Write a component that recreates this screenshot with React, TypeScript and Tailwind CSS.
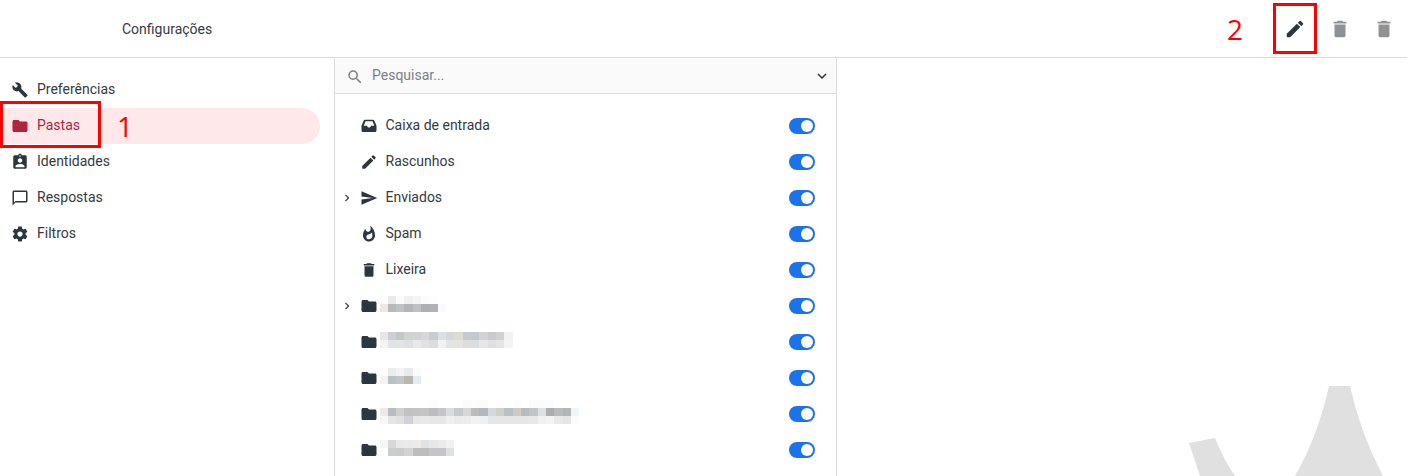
import React from 'react';
import {
  MdFolder,
  MdAssignmentInd,
  MdChatBubbleOutline,
  MdEdit,
  MdSend,
  MdWhatshot,
  MdDelete,
  MdExpandMore,
  MdChevronRight,
} from 'react-icons/md';

type IconProps = { size?: number; className?: string };

// inbox with a rounded tray, not in the icon set
const InboxIcon = ({ size = 18, className }: IconProps) => (
  <svg width={size} height={size} viewBox="0 0 24 24" fill="currentColor" className={className}>
    <path fillRule="evenodd" d="M7 3.500h10c1 0 1.800.5 2.200 1.400L22 11.500V18c0 1.100-.9 2-2 2H4c-1.100 0-2-.9-2-2v-6.500l2.800-6.600C5.200 4 6 3.500 7 3.500zm.3 2.300L5 11.500h4.500c0 1.400 1.100 2.500 2.500 2.500s2.500-1.100 2.500-2.500H19l-2.300-5.700H7.300z" />
  </svg>
);

const WrenchIcon = ({ size = 18, className }: IconProps) => (
  <svg width={size} height={size} viewBox="-1 -1 26 26" fill="currentColor" className={className}>
    <path d="M22.700 19l-9.100-9.100c.9-2.300.4-5-1.500-6.900-2-2-5-2.400-7.400-1.300L9 6 6 9 1.600 4.700C.4 7.100.9 10.100 2.900 12.100c1.900 1.900 4.600 2.400 6.900 1.500l9.100 9.100c.4.400 1 .4 1.400 0l2.300-2.300c.5-.4.500-1.100.1-1.400z" />
  </svg>
);

const GearIcon = ({ size = 18, className }: IconProps) => (
  <svg width={size} height={size} viewBox="0 0 24 24" fill="currentColor" className={className}>
    <path d="M19.430 12.980c.04-.32.07-.64.07-.98s-.03-.66-.07-.98l2.110-1.650c.19-.15.24-.42.12-.64l-2-3.460c-.12-.22-.39-.3-.61-.22l-2.490 1c-.52-.4-1.080-.73-1.690-.98l-.38-2.650A.488.488 0 0 0 14 2h-4c-.25 0-.46.18-.49.42l-.38 2.650c-.61.25-1.170.59-1.690.98l-2.490-1c-.23-.09-.49 0-.61.22l-2 3.460c-.13.22-.07.49.12.64l2.110 1.650c-.04.32-.07.65-.07.98s.03.66.07.98l-2.110 1.650c-.19.15-.24.42-.12.64l2 3.460c.12.22.39.3.61.22l2.490-1c.52.4 1.080.73 1.690.98l.38 2.650c.03.24.24.42.49.42h4c.25 0 .46-.18.49-.42l.38-2.650c.61-.25 1.170-.59 1.690-.98l2.490 1c.23.09.49 0 .61-.22l2-3.460c.12-.22.07-.49-.12-.64l-2.110-1.650zM12 15.500c-1.930 0-3.500-1.570-3.500-3.500s1.570-3.500 3.500-3.500 3.500 1.570 3.500 3.500-1.570 3.500-3.500 3.500z" />
  </svg>
);

const SearchIcon = ({ size = 18, className }: IconProps) => (
  <svg width={size} height={size} viewBox="0 0 24 24" fill="currentColor" className={className}>
    <path d="M15.500 14h-.79l-.28-.27A6.470 6.470 0 0 0 16 9.500 6.500 6.500 0 1 0 9.500 16c1.610 0 3.090-.59 4.230-1.570l.27.28v.79l5 4.990L20.490 19l-4.990-5zm-6 0C7.010 14 5 11.990 5 9.500S7.010 5 9.500 5 14 7.010 14 9.500 11.990 14 9.500 14z" />
  </svg>
);

const menu = [
  { label: 'Preferências', icon: WrenchIcon },
  { label: 'Pastas', icon: MdFolder, active: true },
  { label: 'Identidades', icon: MdAssignmentInd },
  { label: 'Respostas', icon: MdChatBubbleOutline },
  { label: 'Filtros', icon: GearIcon },
];

const folders = [
  { label: 'Caixa de entrada', icon: InboxIcon },
  { label: 'Rascunhos', icon: MdEdit },
  { label: 'Enviados', icon: MdSend, sub: true },
  { label: 'Spam', icon: MdWhatshot },
  { label: 'Lixeira', icon: MdDelete },
];

// pixelated folder names, one list of colours per row of blocks
const blurred = [
  {
    sub: true,
    rows: [
      ['#fcfcfc', '#e9eaeb', '#fbfbfb', '#eff0f0', '#f4f5f5', '#fcfcfc', '#fdfdfd', '#ffffff'],
      ['#ece9e6', '#b9b9b9', '#bcc3c4', '#b5b5b9', '#bcc1c4', '#aeafb2', '#aeb2b7', '#f8fbfe'],
    ],
  },
  {
    rows: [
      ['#e9e5e5', '#ccd0d3', '#c4c7c8', '#d1d3d3', '#d1d4d4', '#d5d7d8', '#c8ccd0', '#dde0e3', '#d6d7d8', '#dedbd5', '#c8cacd', '#c2c8cd', '#d1d3d7', '#c9cbcc', '#d0d1d1', '#f0f2f4'],
      ['#f3f3f3', '#e2e3e5', '#e3e5e5', '#dde1e4', '#e9e9e9', '#e1e2e4', '#d9dde1', '#f1f2f2', '#e3e4e5', '#e5e3e0', '#dcdddf', '#dbdee1', '#e6e7e8', '#dfe0e1', '#e5e5e5', '#f1f3f4'],
    ],
  },
  {
    rows: [
      ['#ffffff', '#ebecec', '#f3f3f3', '#e9eaeb', '#fbfbfb'],
      ['#f3f3f3', '#bec1c4', '#c3c6c8', '#b8b7b4', '#e8ecf0'],
    ],
  },
  {
    rows: [
      ['#fefefe', '#fcfdfd', '#ffffff', '#ffffff', '#ffffff', '#ffffff', '#fcfcfc', '#ffffff', '#ffffff', '#ffffff', '#fbfbfb', '#fcfcfc', '#fbfbfb', '#ffffff', '#fdfdfd', '#ffffff', '#fcfcfc', '#ffffff', '#fbfbfb', '#fbfbfb', '#fcfcfc', '#ffffff', '#ffffff', '#ffffff'],
      ['#ece9e6', '#b9bcc1', '#cfd0cd', '#c1c3c3', '#c2c4c4', '#c3c5c5', '#babcbf', '#c3c6c9', '#dadde0', '#c6cacd', '#d7d7d6', '#bcbbb9', '#b1b9bf', '#d3d9dc', '#cfd0cc', '#bcc0c5', '#cdcac6', '#b9bbc0', '#c1c4c7', '#dcdfe2', '#adadad', '#b9babb', '#b3b4b5', '#f0f5fa'],
      ['#f7f7f7', '#e4e5e6', '#dfe0e0', '#cfd3d8', '#e7e8e8', '#e8e9e9', '#e6e7e7', '#e6e8e8', '#eef0f0', '#eaebeb', '#eeeded', '#f2f2f2', '#eff0f1', '#e5e6e7', '#e5e6e6', '#e5e6e6', '#e6e6e6', '#e5e6e6', '#e7e8e8', '#f0f1f2', '#f5f4f3', '#e9e9ea', '#e5e5e6', '#f9fbfd'],
    ],
  },
  {
    rows: [
      ['#f6f6f6', '#d6d8da', '#e8e9e9', '#e9eaea', '#ecebea', '#e1e2e4', '#e6e7e8', '#ebecec', '#f0f2f3'],
      ['#fefefe', '#cacdce', '#c9cccd', '#d2d3d3', '#bcbdbd', '#bfbdbb', '#c3c5c6', '#c2c6c8', '#dce0e3'],
    ],
  },
];

const Toggle = () => (
  <div className="ml-auto mr-[21px] flex h-4 w-[26px] shrink-0 items-center justify-end rounded-full bg-[#1a73e8] pr-0.5">
    <div className="size-3 rounded-full bg-white" />
  </div>
);

const Expander = ({ show }: { show?: boolean }) => (
  <div className="flex w-6 justify-start pl-[5px]">
    {show && <MdChevronRight size={14} className="text-[#2c363f]" />}
  </div>
);

const App = () => {
  return (
    <div className="flex h-[476px] w-[1407px] flex-col overflow-hidden bg-white font-['Roboto',sans-serif] text-sm text-[#343a40]">
      <header className="relative flex h-[58px] shrink-0 items-center border-b border-[#dcdcdc] pl-[122px]">
        <span>Configurações</span>
        <div className="ml-auto mr-[1px] flex items-center">
          <span className="mr-[31px] font-['Open_Sans',sans-serif] text-[28px] leading-none text-[#ff0000]">2</span>
          <div className="flex size-11 items-center justify-center">
            <MdEdit size={22} className="-ml-[2px] text-[#2c363f]" />
          </div>
          <div className="flex size-11 items-center justify-center">
            <MdDelete size={22} className="-ml-[1px] text-[#8f9294]" />
          </div>
          <div className="flex size-11 items-center justify-center">
            <MdDelete size={22} className="text-[#8f9294]" />
          </div>
        </div>
        <div className="absolute left-[1273px] top-[3px] h-[51px] w-[44px] border-[3px] border-[#ff0000]" />
      </header>

      <div className="flex min-h-0 flex-1">
        <aside className="relative w-[335px] shrink-0 border-r border-[#dcdcdc] pt-[14px]">
          {menu.map((item) => {
            const Icon = item.icon;
            return (
              <div
                key={item.label}
                className={
                  item.active
                    ? 'flex h-9 w-[320px] items-center rounded-r-[18px] bg-[#ffe8ea] pl-[11px] text-[#b0243f]'
                    : 'flex h-9 w-[320px] items-center pl-[11px]'
                }
              >
                <Icon size={18} className={item.active ? 'text-[#b0243f]' : 'text-[#2c363f]'} />
                <span className="mb-[2px] ml-[8px]">{item.label}</span>
                {item.active && (
                  <span className="ml-[37px] font-['Open_Sans',sans-serif] text-[28px] leading-none text-[#ff0000]">1</span>
                )}
              </div>
            );
          })}
          <div className="absolute left-0 top-[43px] h-[47px] w-[101px] border-[3px] border-[#ff0000]" />
        </aside>

        <section className="w-[502px] shrink-0 border-r border-[#dcdcdc]">
          <div className="flex h-9 items-center border-b border-[#dcdcdc] bg-[#fafafa] pl-[11px] pr-[5px]">
            <SearchIcon size={18} className="mt-[2px] text-[#7b8187]" />
            <span className="mb-[2px] ml-[8px] text-[#7b8187]">Pesquisar...</span>
            <MdExpandMore size={18} className="ml-auto text-[#2c363f]" />
          </div>
          <div className="pt-[14px]">
            {folders.map((f) => {
              const Icon = f.icon;
              return (
                <div key={f.label} className="flex h-9 items-center">
                  <Expander show={f.sub} />
                  <Icon size={18} className="ml-[0.5px] text-[#2c363f]" />
                  <span className="mb-[2px] ml-[8px]">{f.label}</span>
                  <Toggle />
                </div>
              );
            })}
            {blurred.map((f, i) => (
              <div key={i} className="flex h-9 items-center">
                <Expander show={f.sub} />
                <MdFolder size={18} className="ml-[0.5px] text-[#2c363f]" />
                <div className="mb-[5px] ml-[2px] flex flex-col">
                  {f.rows.map((row, r) => (
                    <div key={r} className="flex">
                      {row.map((c, n) => (
                        <div key={n} className="h-2 w-[8.33px]" style={{ backgroundColor: c }} />
                      ))}
                    </div>
                  ))}
                </div>
                <Toggle />
              </div>
            ))}
          </div>
        </section>

        <main className="relative flex-1 overflow-hidden">
          <svg className="absolute bottom-0 right-0" width="570" height="90" viewBox="837 386 570 90">
            <path d="M1329 386 L1350 386 Q1360 432 1383 476 L1295 476 Q1318 436 1329 386 Z" fill="#e0e0e0" />
            <path d="M1189 443 L1215 438 Q1224 460 1235 476 L1200 476 Z" fill="#e0e0e0" />
          </svg>
        </main>
      </div>
    </div>
  );
};

export default App;
